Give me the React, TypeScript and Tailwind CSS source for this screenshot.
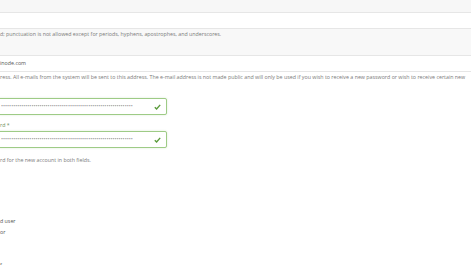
import React from 'react';

const dots = '•'.repeat(65);

function PasswordBox() {
  return (
    <div className="-ml-[2px] flex h-[17px] w-[169px] items-center justify-between rounded-[2px] border border-[#9ecb86] bg-white pl-[2px] pr-[5px] shadow-[0_0_2px_rgba(120,180,90,0.3)]">
      <span className="whitespace-nowrap text-[5.4px] leading-none text-[#999]">{dots}</span>
      <svg width="7" height="6" viewBox="0 0 7 6" className="shrink-0">
        <path d="M0.8 3.2 L2.6 5 L6.2 0.9" fill="none" stroke="#5a9b3b" strokeWidth="1.4" />
      </svg>
    </div>
  );
}

export default function App() {
  return (
    <div className="h-[265px] w-[471px] overflow-hidden bg-white font-['Open_Sans',sans-serif] text-[5.3px] text-[#7a7a7a]">
      {/* top field bands */}
      <div className="h-[13px] border-b border-[#e6e6e6] bg-[#f7f7f7]" />
      <div className="h-[16px] border-b border-[#e6e6e6] bg-white" />
      <div className="h-[27px] border-b border-[#e6e6e6] bg-[#f8f8f8] pt-[1px]">
        <p className="whitespace-nowrap leading-[8px]">
          d; punctuation is not allowed except for periods, hyphens, apostrophes, and underscores.
        </p>
      </div>
      <div className="flex h-[16px] items-center border-b border-[#e6e6e6] bg-white">
        <span className="text-[#555]">inode.com</span>
      </div>
      <p className="whitespace-nowrap pt-[1px] leading-[8px]">
        ress. All e-mails from the system will be sent to this address. The e-mail address is not made public and will only be used if you wish to receive a new password or wish to receive certain new
      </p>

      {/* password fields */}
      <div className="mt-[17px]">
        <PasswordBox />
      </div>
      <p className="mt-[6px] leading-[8px] text-[#6f8f60]">rd *</p>
      <div className="mt-[2px]">
        <PasswordBox />
      </div>
      <p className="mt-[8px] leading-[8px]">rd for the new account in both fields.</p>

      {/* status / roles */}
      <div className="mt-[52px] text-[#555]">
        <p className="leading-[11px]">d user</p>
        <p className="leading-[11px]">or</p>
      </div>
      <p className="mt-[23px] leading-[8px] text-[#555]">f</p>
    </div>
  );
}
